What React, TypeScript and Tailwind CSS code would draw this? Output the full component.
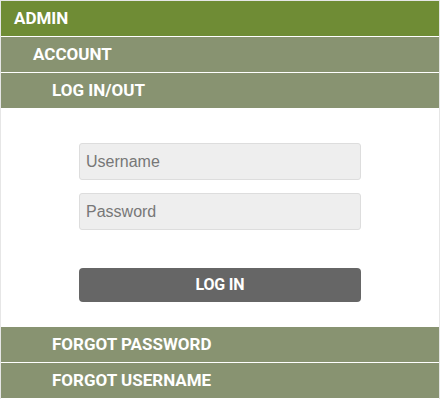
import React from "react";

const rowBase =
  "h-[36px] flex items-center text-white font-bold text-[17px] uppercase border-b border-white font-['Roboto',sans-serif]";

const NavRow: React.FC<{ label: string; level: number; active?: boolean }> = ({ label, level, active }) => {
  const indent = level === 0 ? "pl-[13px]" : level === 1 ? "pl-[32px]" : "pl-[51px]";
  const bg = active ? "bg-[#6f8c35]" : "bg-[#889371]";
  return <div className={`${rowBase} ${indent} ${bg}`}>{label}</div>;
};

export default function App() {
  return (
    <div className="w-[440px] h-[403px] bg-white">
      <div className="border border-[#e6e6e6] border-b-0">
        <NavRow label="Admin" level={0} active />
        <NavRow label="Account" level={1} />
        <NavRow label="Log In/Out" level={2} />

        <div className="bg-white pt-[34px] pb-[24px] px-[78px] border-b border-white">
          <div className="flex flex-col gap-[13px]">
            <input
              type="text"
              placeholder="Username"
              className="h-[37px] w-full rounded-[3px] border border-[#dddddd] bg-[#eeeeee] px-[6px] text-[16px] font-['Liberation_Sans',sans-serif] text-[#555] placeholder:text-[#777] outline-none"
            />
            <input
              type="password"
              placeholder="Password"
              className="h-[37px] w-full rounded-[3px] border border-[#dddddd] bg-[#eeeeee] px-[6px] text-[16px] font-['Liberation_Sans',sans-serif] text-[#555] placeholder:text-[#777] outline-none"
            />
          </div>
          <button className="mt-[38px] h-[34px] w-full rounded-[4px] bg-[#666666] text-white font-bold text-[16px] font-['Roboto',sans-serif] tracking-[-0.2px]">
            LOG IN
          </button>
        </div>

        <NavRow label="Forgot Password" level={2} />
        <NavRow label="Forgot Username" level={2} />
      </div>
    </div>
  );
}
